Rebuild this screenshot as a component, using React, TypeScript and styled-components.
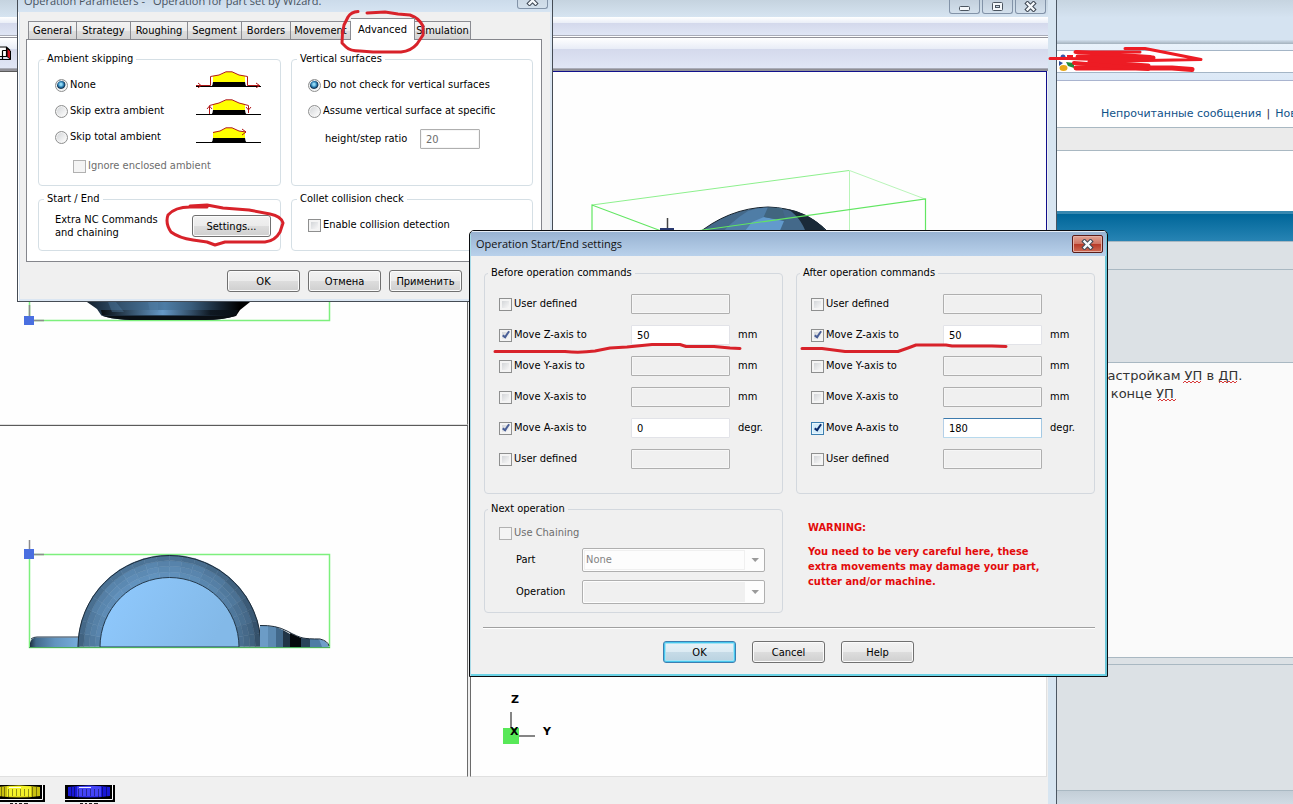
import React from "react";
import styled, { createGlobalStyle, css } from "styled-components";

const uiFont = `"DejaVu Sans Condensed", "Noto Sans", sans-serif`;
const titleFont = `"Open Sans", "Noto Sans", sans-serif`;
const webFont = `"DejaVu Sans", sans-serif`;

const GlobalStyle = createGlobalStyle`
  *, *::before, *::after { box-sizing: border-box; }
  body { margin: 0; background: #d5e4f1; overflow: hidden; }
  button, input, select, textarea { font: inherit; color: inherit; margin: 0; }
`;

/* ---------- desktop ---------- */

const Desktop = styled.main`
  position: relative;
  display: grid;
  grid-template-columns: 1057fr 236fr;
  min-height: 100vh;
  overflow: hidden;
  font: 11px/14px ${uiFont};
  color: #000;
`;

const AppWindow = styled.section`
  min-width: 0;
  display: flex;
  flex-direction: column;
  padding-right: 8px;
  border-right: 1px solid #4c5763;
  background: #d7e5f1;
`;

const AppTitleBar = styled.header`
  height: 17px;
  display: flex;
  justify-content: flex-end;
  align-items: flex-start;
  gap: 2px;
  padding-right: 2px;
  background: linear-gradient(#c5d3df, #d6e4f1);
`;

const CaptionButton = styled.button<{ $danger?: boolean }>`
  width: 31px;
  height: 14px;
  padding: 0;
  display: flex;
  justify-content: center;
  align-items: center;
  border: 1px solid #8293a8;
  border-top: 0;
  border-radius: 0 0 3px 3px;
  background: linear-gradient(#c3d0dd, #d3e0ec);
  ${(p) =>
    p.$danger &&
    css`
      height: 18px;
      border: 1px solid #5a1c18;
      border-radius: 2px;
      background: linear-gradient(#e0a394, #cf7463 48%, #b73a28 52%, #cf6a54);
      box-shadow: inset 0 0 0 1px #e5b0a5;
    `}
`;

const Bar = styled.div<{ $tall?: boolean }>`
  height: ${(p) => (p.$tall ? 30 : 18)}px;
  display: flex;
  align-items: center;
  background: linear-gradient(#ffffff, #e9edf7 35%, #d4d9ec 36%, #e0e6f5);
`;

const BarRule = styled.div<{ $thick?: boolean }>`
  height: 3px;
  border-top: 1px solid #a9acb8;
  border-bottom: 1px solid #92929a;
  background: ${(p) => (p.$thick ? "#8f8f95" : "#ffffff")};
`;

const Views = styled.div`
  flex: 1;
  display: grid;
  grid-template-columns: 468fr 577fr;
  grid-template-rows: 354fr 352fr;
  column-gap: 2px;
  background: #f0f0f0;
  padding-right: 1px;
`;

const View = styled.div<{ $active?: boolean }>`
  min-width: 0;
  min-height: 0;
  overflow: hidden;
  background: #fefefe;
  border: 1px solid ${(p) => (p.$active ? "#10108c" : "#e0e0e0")};
  ${(p) =>
    p.$active
      ? css`
          border-bottom-color: #777;
        `
      : css`
          border-left: 1px solid #6b6b6b;
          border-top: 1px solid #5a5a5a;
        `}
`;

const LeftView = styled(View)`
  border-left: 0;
  border-right: 1px solid #6b6b6b;
`;

const Scene = styled.svg`
  display: block;
  width: 100%;
  height: 100%;
`;

const DialStrip = styled.footer`
  height: 27px;
  display: flex;
  align-items: flex-start;
  gap: 20px;
  padding-top: 7px;
  background: #f0f0f0;
`;

/* ---------- browser ---------- */

const Browser = styled.section`
  min-width: 0;
  display: flex;
  flex-direction: column;
  overflow: hidden;
  background: #dce1e5;
  font: 11px/16px ${webFont};
`;

const BrowserTop = styled.header`
  height: 44px;
  background: linear-gradient(#c6d4e0, #d5e3f1 40%, #d5e3f1 90%, #a3b1bd);
`;

const AddressBar = styled.div`
  height: 37px;
  display: flex;
  padding: 6px 0 7px;
  border-bottom: 1px solid #a9b4cf;
  background: linear-gradient(#e9f2fb, #dbe8f6);
`;

const AddressField = styled.label`
  flex: 1;
  display: flex;
  align-items: center;
  gap: 4px;
  padding-left: 2px;
  border-top: 1px solid #a4b5c6;
  border-bottom: 1px solid #a4b5c6;
  background: #fff;
`;

const AddressInput = styled.input`
  flex: 1;
  min-width: 0;
  border: 0;
  outline: 0;
  background: transparent;
`;

const LinkRow = styled.nav`
  height: 47px;
  display: flex;
  gap: 5px;
  padding: 25px 0 0 44px;
  overflow: hidden;
  white-space: nowrap;
  background: #fff;
  color: #333;
  border-bottom: 1px solid #a9b8c2;
`;

const PageLink = styled.a`
  color: #105289;
  text-decoration: none;
`;

const GreyBand = styled.div`
  height: 23px;
  background: #ebebeb;
  border-bottom: 1px solid #a9b8c2;
`;

const WhiteBand = styled.div`
  height: 60px;
  background: #fff;
`;

const BlueBand = styled.div`
  height: 30px;
  border-top: 3px solid #3788b0;
  background: linear-gradient(#006699, #2784b4);
`;

const FormBand = styled.div<{ $h: number }>`
  height: ${(p) => p.$h}px;
  border-top: 1px solid #a9b8c2;
`;

const Editor = styled.div`
  position: relative;
  flex: 1;
  display: flex;
  min-height: 0;
`;

const MessageBox = styled.textarea`
  flex: 1;
  min-width: 0;
  padding: 4px 0 0 42px;
  border: 0;
  border-top: 1px solid #a9b8c2;
  outline: 0;
  resize: none;
  overflow: hidden;
  background: #fafafa;
  color: #333;
  font: 13px/18px ${webFont};
`;

const SpellMarks = styled.svg`
  position: absolute;
  left: 0;
  top: 0;
  pointer-events: none;
`;

const BrowserFoot = styled.div`
  height: 14px;
  border-top: 1px solid #a9b8c2;
  background: linear-gradient(#c3ced7, #d1dbe4);
`;

/* ---------- dialogs ---------- */

const ParamsDialog = styled.section`
  position: absolute;
  left: 17px;
  top: -10px;
  width: 536px;
  border: 1px solid #454c55;
  border-top: 0;
  background: #f0f0f0;
  box-shadow: inset 1px 0 #fff, inset 2px 0 #dbe6f2, inset -2px 0 #dbe6f2, inset 0 -2px #dbe6f2;
`;

const ParamsTitle = styled.header`
  height: 22px;
  display: flex;
  justify-content: space-between;
  align-items: flex-start;
  padding: 0 4px 0 6px;
  background: linear-gradient(#c3d4e4, #d6e4f2);
  color: #47525e;
  font: 11px/22px ${titleFont};
  white-space: pre;
  ${CaptionButton} { height: 19px; padding-top: 3px; }
`;

const TabStrip = styled.div`
  display: flex;
  align-items: flex-end;
  height: 27px;
  padding: 0 10px;
`;

const Tab = styled.button<{ $w: number; $on?: boolean }>`
  width: ${(p) => p.$w}px;
  height: 18px;
  padding: 1px 0 0;
  border: 1px solid #8b8c92;
  border-bottom: 0;
  background: linear-gradient(#f3f3f3, #ececec 50%, #dedede 52%, #d3d3d3);
  white-space: nowrap;
  line-height: 16px;
  & + & { border-left: 0; }
  ${(p) =>
    p.$on &&
    css`
      height: 22px;
      margin-bottom: -1px;
      padding-bottom: 1px;
      background: #fff;
      z-index: 1;
    `}
`;

const TabPanel = styled.div`
  display: grid;
  grid-template-columns: 243px 242px;
  gap: 6px 10px;
  margin: 0 10px 0 8px;
  padding: 12px 0 10px 11px;
  border: 1px solid #85868c;
  background: #fff;
`;

const Group = styled.fieldset<{ $h?: number; $etched?: boolean }>`
  min-width: 0;
  min-height: ${(p) => p.$h ?? 0}px;
  margin: 0;
  padding: 0 9px 0 16px;
  border: 1px solid #d5dfe5;
  border-radius: 4px;
  ${(p) =>
    p.$etched &&
    css`
      border-color: #d3d8de;
      padding: 0 14px;
    `}
`;

const Caption = styled.legend`
  margin-left: -11px;
  padding: 0 3px;
  line-height: 14px;
`;

const Columns = styled.div`
  display: flex;
  justify-content: space-between;
`;

const Choices = styled.div`
  display: flex;
  flex-direction: column;
  gap: 6px;
  padding-top: 9px;
`;

const Sketches = styled.div`
  display: flex;
  flex-direction: column;
  gap: 11px;
  padding: 5px 10px 0 0;
`;

const Choice = styled.label<{ $dim?: boolean; $indent?: boolean }>`
  display: flex;
  align-items: center;
  gap: 2px;
  height: 20px;
  white-space: nowrap;
  color: ${(p) => (p.$dim ? "#6d6d6d" : "inherit")};
  ${(p) =>
    p.$indent &&
    css`
      margin: 3px -20px 0 18px;
    `}
`;

const Tick = styled.input.attrs({ type: "checkbox" })<{ $hot?: boolean }>`
  appearance: none;
  position: relative;
  width: 13px;
  height: 13px;
  flex: none;
  border: 1px solid #8e8f8f;
  background: linear-gradient(135deg, #c9ccd0, #f6f6f6 80%);
  box-shadow: inset 0 0 0 2px #f4f4f4;
  &:disabled {
    border-color: #b1b1b1;
    background: #f4f4f4;
  }
  ${(p) =>
    p.$hot &&
    css`
      border-color: #3c7fb1;
      background: #d3ecfa;
      box-shadow: inset 0 0 0 1px #e8f6fd;
    `}
  &:checked::after {
    content: "";
    position: absolute;
    left: 4px;
    top: 0;
    width: 4px;
    height: 8px;
    border: solid ${(p) => (p.$hot ? "#0b2a6b" : "#4a5f97")};
    border-width: 0 2px 2px 0;
    transform: rotate(35deg);
  }
`;

const Radio = styled.input.attrs({ type: "radio" })`
  appearance: none;
  width: 13px;
  height: 13px;
  flex: none;
  border: 1px solid #8e8f8f;
  border-radius: 50%;
  background: linear-gradient(135deg, #cfd2d5, #f8f8f8 80%);
  box-shadow: inset 0 0 0 1px #f4f4f4;
  &:checked {
    background: radial-gradient(circle at 45% 40%, #8fd8f5 0 1px, #1f6fa5 3px, #12324f 4px, #eef2f5 5px);
  }
`;

const Field = styled.input<{ $w: number; $focused?: boolean }>`
  width: ${(p) => p.$w}px;
  height: 20px;
  padding: 0 5px;
  border: 1px solid #e2e3e8;
  border-radius: 1px;
  outline: 0;
  background: #fff;
  &:disabled {
    border-color: #afafaf;
    background: #f0f0f0;
    color: #6d6d6d;
    box-shadow: inset 0 0 0 1px #f6f6f6;
  }
  ${(p) =>
    p.$focused &&
    css`
      border-color: #3d7bad #a4c9e3 #b7d9ed #b5cfe7;
    `}
`;

const RatioField = styled(Field)`
  &:disabled { background: #fff; }
`;

const RatioRow = styled.label`
  display: flex;
  align-items: center;
  gap: 14px;
  height: 20px;
  padding-left: 17px;
  margin-top: 2px;
`;

const RatioText = styled.span`
  width: 81px;
  white-space: nowrap;
`;

const StartEnd = styled.div`
  display: flex;
  justify-content: space-between;
  align-items: center;
  padding-top: 7px;
  line-height: 13px;
`;

const StartEndText = styled.p`
  margin: 0;
  white-space: nowrap;
`;

const PushButton = styled.button<{ $w: number; $primary?: boolean }>`
  width: ${(p) => p.$w}px;
  height: 22px;
  padding: 1px 0 0;
  border: 1px solid #707070;
  border-radius: 3px;
  background: linear-gradient(#f2f2f2, #ebebeb 49%, #dddddd 51%, #cfcfcf);
  box-shadow: inset 0 0 0 1px #fbfbfb;
  ${(p) =>
    p.$primary &&
    css`
      border-color: #3c7fb1;
      background: linear-gradient(#eaf2f7, #dcebf3 49%, #c6dbe7 51%, #b9d2e0);
      box-shadow: inset 0 0 0 1px #48c8ee, inset 0 0 0 2px #a5e2f4;
    `}
`;

const ParamsButtons = styled.div`
  display: flex;
  justify-content: flex-end;
  gap: 8px;
  padding: 8px 90px 9px 0;
`;

const SettingsDialog = styled.section`
  position: absolute;
  left: 469px;
  top: 230px;
  width: 639px;
  border: 1px solid #0b0d10;
  border-radius: 5px 5px 0 0;
  background: #f0f0f0;
  box-shadow: inset 1px 0 #a9dbe8, inset -2px 0 #6cc6d8, inset 0 -2px #6cd3e6;
  overflow: hidden;
`;

const SettingsTitle = styled.header`
  height: 25px;
  display: flex;
  justify-content: space-between;
  align-items: center;
  padding: 0 3px 0 5px;
  margin: 0 1px;
  border-top: 1px solid #e6eef7;
  background: linear-gradient(#98b3d2, #b9d1eb);
`;

const TitleText = styled.h2`
  margin: 0;
  font: 11px/22px ${titleFont};
  color: #111;
`;

const SettingsBody = styled.div`
  display: grid;
  grid-template-columns: 299px 299px;
  gap: 8px 13px;
  padding: 10px 12px 0 14px;
`;

const CommandRows = styled.div`
  display: flex;
  flex-direction: column;
  gap: 11px;
  padding-top: 14px;
`;

const CommandRow = styled.div`
  display: flex;
  align-items: center;
  height: 20px;
`;

const CommandLabel = styled(Choice)`
  width: 132px;
`;

const Unit = styled.span`
  margin-left: 8px;
`;

const NextRows = styled.div`
  display: flex;
  flex-direction: column;
  padding-top: 7px;
`;

const ComboRow = styled.label`
  display: flex;
  align-items: center;
  height: 24px;
  margin: 5px 0 3px 17px;
`;

const ComboLabel = styled.span`
  width: 66px;
`;

const ComboBox = styled.span<{ $empty?: boolean }>`
  display: flex;
  align-items: center;
  width: 183px;
  height: 24px;
  padding: 1px;
  border: 1px solid #afafaf;
  border-radius: 2px;
  background: #fdfdfd;
  select {
    appearance: none;
    flex: 1;
    height: 20px;
    padding: 0 1px;
    border: 1px solid #f0f0f0;
    outline: 0;
    background: ${(p) => (p.$empty ? "#f0f0f0" : "#fdfdfd")};
    color: #838383;
    opacity: 1;
  }
  svg { width: 18px; flex: none; }
`;

const Warning = styled.div`
  padding: 18px 12px 0;
  color: #e30b0b;
  font-weight: 700;
  line-height: 15px;
  white-space: nowrap;
  p { margin: 0 0 9px; }
`;

const Divider = styled.hr`
  margin: 14px 12px 0 13px;
  border: 0;
  border-top: 1px solid #a0a0a0;
  border-bottom: 1px solid #fff;
`;

const SettingsButtons = styled.div`
  display: flex;
  justify-content: center;
  gap: 16px;
  padding: 12px 0 13px;
`;

const Markup = styled.svg`
  position: absolute;
  left: 0;
  top: 0;
  pointer-events: none;
`;

/* ---------- drawings ---------- */

const CloseGlyph = () => (
  <svg width="13" height="11" viewBox="0 0 13 11" aria-hidden="true">
    <path d="M3.500 2.500L9.500 8.500M9.500 2.500L3.500 8.500" stroke="#3f4854" strokeWidth="4.400" strokeLinecap="square" />
    <path d="M3.500 2.500L9.500 8.500M9.500 2.500L3.500 8.500" stroke="#f6f9fc" strokeWidth="2.400" strokeLinecap="square" />
  </svg>
);

const MinGlyph = () => (
  <svg width="13" height="11" viewBox="0 0 13 11" aria-hidden="true">
    <rect x="1.500" y="5.500" width="10" height="4" rx="1" fill="#f4f7fa" stroke="#4b5560" />
  </svg>
);

const MaxGlyph = () => (
  <svg width="13" height="11" viewBox="0 0 13 11" aria-hidden="true">
    <rect x="1.500" y="1.500" width="10" height="8" rx="1" fill="#f4f7fa" stroke="#4b5560" />
    <rect x="4.500" y="4.500" width="4" height="2" fill="#c9d6e3" stroke="#4b5560" />
  </svg>
);

const mix = (a: number[], b: number[], t: number) =>
  `rgb(${a.map((v, i) => Math.round(v + (b[i] - v) * Math.max(0, Math.min(1, t)))).join(",")})`;

const DARK = [26, 42, 56];
const LIGHT = [114, 170, 220];

/* Faceted half ring of the turned part, seen from above. */
function HalfRing({ cx, cy, r0, r1 }: { cx: number; cy: number; r0: number; r1: number }) {
  const facets: React.ReactNode[] = [];
  const steps = 22;
  const rings = 4;
  for (let k = 0; k < rings; k++) {
    const a = r0 + ((r1 - r0) * k) / rings;
    const b = r0 + ((r1 - r0) * (k + 1)) / rings;
    for (let i = 0; i < steps; i++) {
      const t0 = Math.PI + (Math.PI * i) / steps;
      const t1 = Math.PI + (Math.PI * (i + 1)) / steps;
      const mid = (t0 + t1) / 2;
      const facing = Math.cos(mid + Math.PI * 0.62);
      const tone = 0.58 + 0.22 * facing - 0.05 * k + (k === 3 ? -0.08 : 0) + (i % 2) * 0.02;
      const c = mix(DARK, LIGHT, tone);
      const pt = (r: number, t: number) => `${(cx + r * Math.cos(t)).toFixed(1)},${(cy + r * Math.sin(t)).toFixed(1)}`;
      facets.push(
        <polygon key={`${k}-${i}`} points={`${pt(a, t0)} ${pt(b, t0)} ${pt(b, t1)} ${pt(a, t1)}`} fill={c} stroke={c} strokeWidth="0.5" />
      );
    }
  }
  return <>{facets}</>;
}

const FrontScene = () => (
  <Scene aria-label="Front view">
    <defs>
      <linearGradient id="cup" x1="0" x2="1">
        <stop offset="0" stopColor="#05080b" />
        <stop offset="0.12" stopColor="#1d3043" />
        <stop offset="0.25" stopColor="#34536f" />
        <stop offset="0.48" stopColor="#4d7ca5" />
        <stop offset="0.62" stopColor="#3a5d7c" />
        <stop offset="0.78" stopColor="#14212e" />
        <stop offset="0.88" stopColor="#000" />
        <stop offset="1" stopColor="#000" />
      </linearGradient>
      <linearGradient id="cupRim" x1="0" x2="1">
        <stop offset="0" stopColor="#000" />
        <stop offset="0.45" stopColor="#6ba0d0" />
        <stop offset="0.8" stopColor="#0a1118" />
      </linearGradient>
    </defs>
    <g transform="translate(0,-72)">
      <path d="M29.500 290V320.500H329.500V290" fill="none" stroke="#7df07d" strokeWidth="1.500" />
      <path d="M75 292H262L250 302 240 310 236 316Q222 320 205 320H130Q108 319 101 315L97 309 87 302Z" fill="url(#cup)" />
      <path d="M101 310H238L236 315H102Z" fill="url(#cupRim)" opacity="0.8" />
      <path d="M108 302H116L124 312H112ZM148 302H158V312H150Z" fill="#5685ad" opacity="0.35" />
      <path d="M101 315.500H237Q222 320 205 320H130Q108 319 101 315Z" fill="#0a0f14" />
      <path d="M29.500 305V320.500H44" fill="none" stroke="#8c8c8c" strokeWidth="1.500" />
      <rect x="24" y="316" width="10" height="9" fill="#4a6fe0" />
    </g>
  </Scene>
);

const TopScene = () => (
  <Scene aria-label="Top view">
    <defs>
      <linearGradient id="disc" x1="0" x2="1" y1="0" y2="0.3">
        <stop offset="0" stopColor="#90caff" />
        <stop offset="1" stopColor="#83b9e8" />
      </linearGradient>
      <linearGradient id="stub" x1="0" x2="1">
        <stop offset="0" stopColor="#1d3040" />
        <stop offset="0.12" stopColor="#426a8c" />
        <stop offset="0.5" stopColor="#6294bf" />
        <stop offset="1" stopColor="#78aedd" />
      </linearGradient>
    </defs>
    <g transform="translate(0,-426)">
      <rect x="29.500" y="554.500" width="300" height="93" fill="#fff" stroke="#7df07d" strokeWidth="1.500" />
      <path d="M30 647V643Q31 638 36 637.500H80V647Z" fill="url(#stub)" />
      <path d="M31 639Q33 637 37 637H80" fill="none" stroke="#24394c" />
      <HalfRing cx={169.5} cy={646.5} r0={69} r1={91.5} />
      <path d="M100 647A69.500 69.500 0 0 1 239 647Z" fill="url(#disc)" stroke="#23394c" />
      <path d="M78 647A91.500 91.500 0 0 1 261 647" fill="none" stroke="#1b2a38" />
      <path d="M260 647V625.500L268 626V647Z" fill="#6c9cc6" />
      <path d="M268 647V626L276 627V647Z" fill="#5c8ab2" />
      <path d="M276 647V627L283 630V647Z" fill="#42698b" />
      <path d="M283 647V630L290 634V647Z" fill="#213547" />
      <path d="M290 647V633L301 638V647Z" fill="#05090d" />
      <path d="M301 647V638L310 639V647Z" fill="#29435a" />
      <path d="M310 647V639H318L323 641 324 647Z" fill="#4f7da5" />
      <path d="M319 639Q328 641 329 647H322Z" fill="#6f9fca" />
      <path d="M260 625.500Q276 625 287 631T303 638 320 639Q328 641 329 646" fill="none" stroke="#1b2a38" />
      <path d="M29 647.500H330" stroke="#4cae5c" />
      <path d="M29.500 540V554.500H44" fill="none" stroke="#8c8c8c" strokeWidth="1.500" />
      <rect x="24" y="549" width="10" height="10" fill="#4a6fe0" />
    </g>
  </Scene>
);

const IsoScene = () => (
  <Scene aria-label="Isometric view">
    <g transform="translate(-471,-72)" fill="none">
      <path d="M849.500 170.500V240M849.500 170.500L925 199" stroke="#b9f5b9" />
      <path d="M592 205L849 170.500" stroke="#8df08d" />
      <path d="M695 236Q728 208 768 207 806 208 830 234L836 240H690Z" fill="#44698a" stroke="#16222d" />
      <path d="M748 211Q758 207.500 768 207.500L764 216 752 240H716Q730 222 748 211Z" fill="#4f7da6" />
      <path d="M752 222L764 217 784 221 776 240H738Z" fill="#629acc" />
      <path d="M768 207.500L782 208 786 221 764 217Z" fill="#41657f" />
      <path d="M788 209Q806 212 822 226L832 240H808Q804 220 788 209Z" fill="#1a2a38" />
      <path d="M592 240V205L680 238M660 236L925.500 199V240" stroke="#62e662" strokeWidth="1.200" />
      <path d="M667.500 218V230" stroke="#444" strokeWidth="1.500" />
      <path d="M660 228H674V234H660Z" fill="#28386f" />
    </g>
  </Scene>
);

const AxisScene = () => (
  <Scene aria-label="Side view">
    <g transform="translate(-471,-426)" fontFamily="DejaVu Sans" fontSize="11" fontWeight="700" fill="#000">
      <rect x="503" y="728" width="16" height="16" fill="#58e858" />
      <path d="M511 712V728M519 736H535" stroke="#858585" strokeWidth="2" />
      <text x="511" y="703">Z</text>
      <text x="510" y="735">X</text>
      <text x="543" y="735">Y</text>
    </g>
  </Scene>
);

const Dial = ({ color, glow, width }: { color: string; glow: string; width: number }) => (
  <svg width={width} height="20" aria-hidden="true">
    <g transform={`translate(${width - 50},0)`}>
      <rect x="0" y="1" width="50" height="17" fill="#000" />
      <path d="M0 15.500H47.500V1" fill="none" stroke="#fff" />
      <path d="M3 3Q24 0 45 3V12Q24 15 3 12Z" fill={color} />
      <path d="M12 2.500Q24 1 36 2.500V12.500H12Z" fill={glow} opacity="0.8" />
      <path d="M6.500 3V13M9.500 3V13M13.500 5V13M17.500 5V12M21.500 5V12M25.500 5V12M29.500 5V12M33.500 5V13M37.500 3V13M41.500 3V13" stroke="#000" opacity="0.4" />
      <path d="M14 3.500H26" stroke="#fff" opacity="0.9" />
      <path d="M15 19.500H18M20 19.500H22M24 19.500H27M29 19.500H33" stroke="#222" />
    </g>
  </svg>
);

const CubeIcon = () => (
  <svg width="12" height="15" aria-hidden="true">
    <path d="M0 .5H6L10.500 4V14.500L6.500 10.500H0Z" fill="#fff" />
    <path d="M7 2L10.500 5V13.500L7 10.500Z" fill="#d01020" stroke="#000" />
    <path d="M0 1H6.500L10 4.500M0 10.500H6.500V1M2.500 4.500H6M2.500 4.500V13.500M0 13.500H10.500" fill="none" stroke="#000" strokeWidth="1.200" />
  </svg>
);

const Sketch = ({ kind }: { kind: 0 | 1 | 2 }) => (
  <svg width="65" height="17" aria-hidden="true">
    <path d="M17 5L24 4 30 1H36L43 4 49 5V12H17Z" fill="#ffff00" />
    <path d="M15 16Q17 14 17 11H49Q49 14 51 16Z" fill="#000" />
    <path d="M0 15.500H65" stroke="#000" />
    {kind === 0 && (
      <path d="M0 14.500H14.500V5.500L23 4 30 .8H36L43 4 51.500 5.500V14.500H64M2 12L5 14.500 2 17M60 12L63.500 14.500 60 17" fill="none" stroke="#b01818" />
    )}
    {kind === 1 && (
      <path d="M13.500 15V6.500L23 4 30 .8H36L43 4 52.500 6.500V14M11 10L13.500 7 16 10M50 8L52.500 11 55 8" fill="none" stroke="#b01818" />
    )}
    {kind === 2 && <path d="M17 5.500L24 4 30 .8H36L43 4 50 5M46 2L50 5 46 8" fill="none" stroke="#b01818" />}
  </svg>
);

const Favicon = () => (
  <svg width="15" height="18" aria-hidden="true">
    <circle cx="4" cy="4" r="2.500" fill="#3a56a8" />
    <path d="M0 8L4 10 0 13Z" fill="#2d4f9e" />
    <rect x="8" y="2" width="6" height="5" fill="#ee1c24" />
    <path d="M7 9L15 10V15L9 13Z" fill="#1f8c3a" />
    <ellipse cx="4.500" cy="15" rx="4" ry="3" fill="#e8a818" />
  </svg>
);

/* Hand-drawn red marks laid over the windows. */
const RedMarks = () => (
  <Markup width="1293" height="804" aria-hidden="true">
    <g fill="none" stroke="#d8222a" strokeWidth="3" strokeLinecap="round" strokeLinejoin="round">
      <path d="M358 11.500Q351 12 348 17L344 25Q342 33 342 43L346 47Q350 51 360 51L373 52H401Q411 51 417 44L423 35V26Q419 18 410 15L398 14 385 12 367 13" />
      <path d="M207 207H190Q175 207 168 215 165 223 171 232 179 238 193 240L207 242 215 245 225 242H265Q275 241 280 232L283 223Q281 216 270 214L249 210 223 208 207 205 190 206" />
      <path d="M495 351.500H565Q580 353 595 351L610 348 627 347 652 344.500H680L686 346.500H714L730 348 740 348.500" />
      <path d="M802 348.500H822L845 351.500H898L908 348 916 345H946L952 346H992L1006 346.500" />
    </g>
    <g fill="none" stroke="#ed1c24" strokeLinecap="round" strokeLinejoin="round">
      <path d="M1050 58.500H1070L1110 60" strokeWidth="3" />
      <path d="M1075 52L1140 52M1125 48.500H1145L1201 59.500 1120 61" strokeWidth="3" />
      <path d="M1078 57L1153 58 1090 62 1148 66 1076 68H1172L1192 69.500" strokeWidth="5" />
      <path d="M1076 52L1150 57M1074 63L1148 69" strokeWidth="4" />
    </g>
  </Markup>
);

/* ---------- data ---------- */

const tabs: { name: string; w: number; on?: boolean }[] = [
  { name: "General", w: 49 },
  { name: "Strategy", w: 54 },
  { name: "Roughing", w: 57 },
  { name: "Segment", w: 54 },
  { name: "Borders", w: 49 },
  { name: "Movement", w: 60 },
  { name: "Advanced", w: 64, on: true },
  { name: "Simulation", w: 56 },
];

type Command = { label: string; unit?: string; value?: string; hot?: boolean };

const commands = (aValue: string, hot?: boolean): Command[] => [
  { label: "User defined" },
  { label: "Move Z-axis to", unit: "mm", value: "50" },
  { label: "Move Y-axis to", unit: "mm" },
  { label: "Move X-axis to", unit: "mm" },
  { label: "Move A-axis to", unit: "degr.", value: aValue, hot },
  { label: "User defined" },
];

const CommandGroup = ({ title, rows }: { title: string; rows: Command[] }) => (
  <Group $h={228} $etched>
    <Caption>{title}</Caption>
    <CommandRows>
      {rows.map((row, i) => (
        <CommandRow key={i}>
          <CommandLabel>
            <Tick defaultChecked={row.value !== undefined} $hot={row.hot} />
            {row.label}
          </CommandLabel>
          <Field
            $w={99}
            $focused={row.hot}
            aria-label={`${title}: ${row.label}`}
            defaultValue={row.value ?? ""}
            disabled={row.value === undefined}
          />
          {row.unit && <Unit>{row.unit}</Unit>}
        </CommandRow>
      ))}
    </CommandRows>
  </Group>
);

const Arrow = () => (
  <svg height="6" viewBox="0 0 18 6" aria-hidden="true">
    <path d="M6.500 1H14L10.200 5Z" fill="#9a9a9a" />
  </svg>
);

export default function App() {
  return (
    <Desktop>
      <GlobalStyle />
      <AppWindow>
        <AppTitleBar>
          <CaptionButton aria-label="Minimize"><MinGlyph /></CaptionButton>
          <CaptionButton aria-label="Restore"><MaxGlyph /></CaptionButton>
          <CaptionButton aria-label="Close application"><CloseGlyph /></CaptionButton>
        </AppTitleBar>
        <Bar />
        <BarRule />
        <Bar $tall><CubeIcon /></Bar>
        <BarRule $thick />
        <Views>
          <LeftView><FrontScene /></LeftView>
          <View $active><IsoScene /></View>
          <LeftView><TopScene /></LeftView>
          <View><AxisScene /></View>
        </Views>
        <DialStrip>
          <Dial color="#c9c010" glow="#ffff30" width={45} />
          <Dial color="#1818d8" glow="#5050ff" width={50} />
        </DialStrip>
      </AppWindow>

      <Browser>
        <BrowserTop />
        <AddressBar>
          <AddressField>
            <Favicon />
            <AddressInput aria-label="Address" />
          </AddressField>
        </AddressBar>
        <LinkRow>
          <PageLink href="#unread">Непрочитанные сообщения</PageLink>
          <span>|</span>
          <PageLink href="#new">Нов</PageLink>
        </LinkRow>
        <GreyBand />
        <WhiteBand />
        <BlueBand />
        <FormBand $h={28} />
        <FormBand $h={93} />
        <Editor>
          <MessageBox aria-label="Message" defaultValue={"настройкам УП в ДП.\nв конце УП"} />
          <SpellMarks width="236" height="50" aria-hidden="true">
            <g fill="none" stroke="#d83a3a">
              <path d="M126 21l2-2 2 2 2-2 2 2 2-2 2 2 2-2 2 2 2-2" />
              <path d="M162 21l2-2 2 2 2-2 2 2 2-2 2 2 2-2 2 2 2-2" />
              <path d="M101 39l2-2 2 2 2-2 2 2 2-2 2 2 2-2 2 2 2-2" />
            </g>
          </SpellMarks>
        </Editor>
        <FormBand $h={7} />
        <FormBand $h={126} />
        <BrowserFoot />
      </Browser>

      <ParamsDialog aria-label="Operation Parameters">
        <ParamsTitle>
          <span>Operation Parameters -  'Operation for part set by Wizard.'</span>
          <CaptionButton aria-label="Close parameters"><CloseGlyph /></CaptionButton>
        </ParamsTitle>
        <TabStrip role="tablist">
          {tabs.map((t) => (
            <Tab key={t.name} role="tab" aria-selected={!!t.on} $w={t.w} $on={t.on}>
              {t.name}
            </Tab>
          ))}
        </TabStrip>
        <TabPanel role="tabpanel">
          <Group $h={134}>
            <Caption>Ambient skipping</Caption>
            <Columns>
              <Choices>
                <Choice><Radio name="ambient" defaultChecked />None</Choice>
                <Choice><Radio name="ambient" />Skip extra ambient</Choice>
                <Choice><Radio name="ambient" />Skip total ambient</Choice>
                <Choice $dim $indent><Tick disabled />Ignore enclosed ambient</Choice>
              </Choices>
              <Sketches>
                <Sketch kind={0} />
                <Sketch kind={1} />
                <Sketch kind={2} />
              </Sketches>
            </Columns>
          </Group>
          <Group $h={134}>
            <Caption>Vertical surfaces</Caption>
            <Choices>
              <Choice><Radio name="vertical" defaultChecked />Do not check for vertical surfaces</Choice>
              <Choice><Radio name="vertical" />Assume vertical surface at specific</Choice>
              <RatioRow>
                <RatioText>height/step ratio</RatioText>
                <RatioField $w={60} defaultValue="20" disabled />
              </RatioRow>
            </Choices>
          </Group>
          <Group $h={59}>
            <Caption>Start / End</Caption>
            <StartEnd>
              <StartEndText>Extra NC Commands<br />and chaining</StartEndText>
              <PushButton $w={79}>Settings...</PushButton>
            </StartEnd>
          </Group>
          <Group $h={59}>
            <Caption>Collet collision check</Caption>
            <Choices>
              <Choice><Tick />Enable collision detection</Choice>
            </Choices>
          </Group>
        </TabPanel>
        <ParamsButtons>
          <PushButton $w={73}>OK</PushButton>
          <PushButton $w={73}>Отмена</PushButton>
          <PushButton $w={73}>Применить</PushButton>
        </ParamsButtons>
      </ParamsDialog>

      <SettingsDialog aria-label="Operation Start/End settings">
        <SettingsTitle>
          <TitleText>Operation Start/End settings</TitleText>
          <CaptionButton $danger aria-label="Close settings"><CloseGlyph /></CaptionButton>
        </SettingsTitle>
        <SettingsBody>
          <CommandGroup title="Before operation commands" rows={commands("0")} />
          <CommandGroup title="After operation commands" rows={commands("180", true)} />
          <Group $h={111} $etched>
            <Caption>Next operation</Caption>
            <NextRows>
              <Choice $dim><Tick disabled />Use Chaining</Choice>
              <ComboRow>
                <ComboLabel>Part</ComboLabel>
                <ComboBox>
                  <select disabled><option>None</option></select>
                  <Arrow />
                </ComboBox>
              </ComboRow>
              <ComboRow>
                <ComboLabel>Operation</ComboLabel>
                <ComboBox $empty>
                  <select disabled><option></option></select>
                  <Arrow />
                </ComboBox>
              </ComboRow>
            </NextRows>
          </Group>
          <Warning>
            <p>WARNING:</p>
            <p>
              You need to be very careful here, these<br />
              extra movements may damage your part,<br />
              cutter and/or machine.
            </p>
          </Warning>
        </SettingsBody>
        <Divider />
        <SettingsButtons>
          <PushButton $w={73} $primary>OK</PushButton>
          <PushButton $w={73}>Cancel</PushButton>
          <PushButton $w={73}>Help</PushButton>
        </SettingsButtons>
      </SettingsDialog>
      <RedMarks />
    </Desktop>
  );
}
